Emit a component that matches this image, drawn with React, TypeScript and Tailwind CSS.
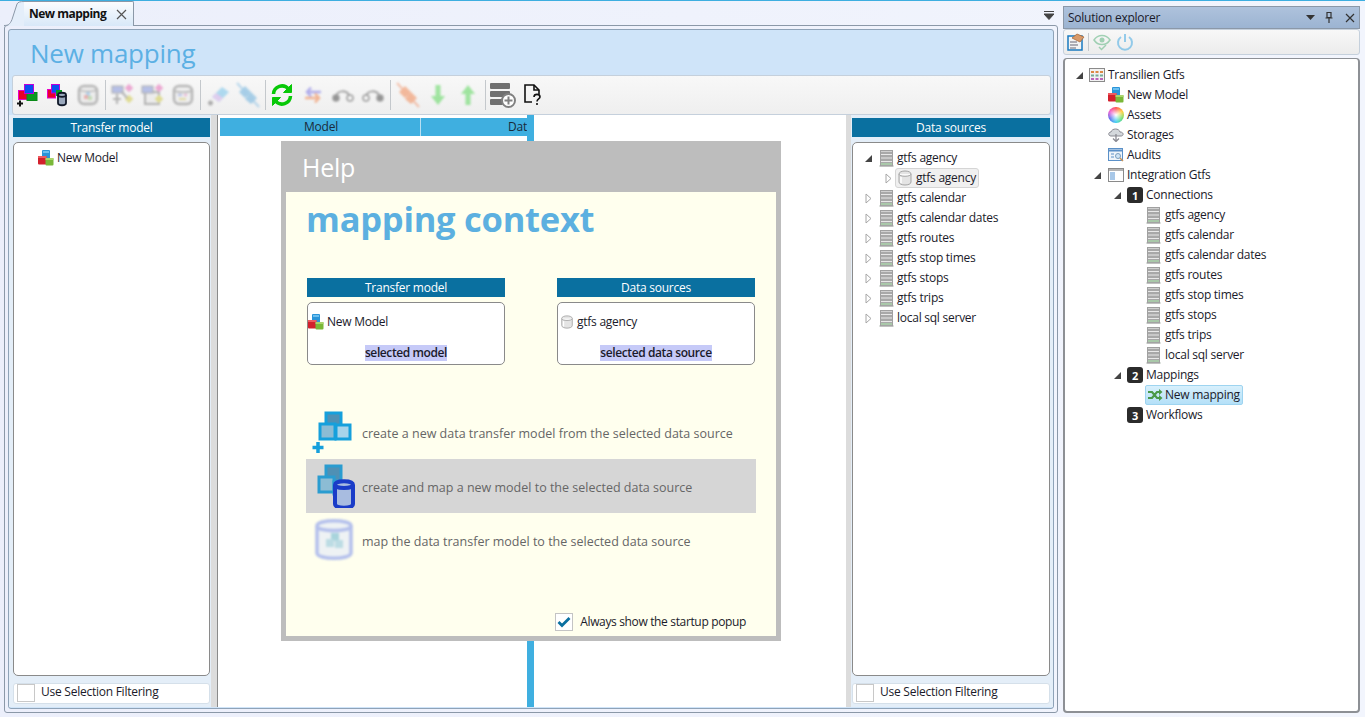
import { ReactNode } from "react";

function Cubes({ size = 16 }: { size?: number }) {
  return (
    <svg width={size} height={size} viewBox="0 0 16 16" className="shrink-0">
      <rect x="4" y="0" width="8" height="9" rx="1" fill="#2a94d8" />
      <rect x="5" y="1" width="6" height="2" fill="#6cc0f0" />
      <rect x="0" y="6" width="8.500" height="8.500" rx="1" fill="#d3202c" />
      <rect x="0" y="6" width="8.500" height="2" fill="#ee5a60" />
      <rect x="7.500" y="8" width="8" height="7.500" rx="1" fill="#7ab838" />
      <rect x="7.500" y="8" width="8" height="2" fill="#aad46c" />
    </svg>
  );
}

function Server() {
  return (
    <svg width="15" height="17" viewBox="0 0 15 17" className="shrink-0">
      <path d="M0 15h15v2H0z" fill="#e0e4e0" />
      <rect x="1.500" y="0.500" width="12" height="15.500" fill="#a8a8a8" stroke="#a0a0a0" />
      <path d="M2 1.500h11" stroke="#d0d0d0" strokeWidth="1" />
      <path d="M2 4.500h11M2 8h11M2 11.500h11" stroke="#e8e8e8" strokeWidth="1" />
      <path d="M2 14h11" stroke="#a9c8a9" strokeWidth="2" />
    </svg>
  );
}

function Cylinder({ size = 16 }: { size?: number }) {
  return (
    <svg width={size} height={size} viewBox="0 0 16 16" className="shrink-0">
      <path d="M2 4c0-4 12-4 12 0v8c0 4-12 4-12 0z" fill="#e4e4e4" stroke="#a5a5a5" />
      <path d="M2 4c0 3 12 3 12 0" fill="#fafafa" stroke="#a5a5a5" />
      <path d="M4 7v6" stroke="#ffffff" strokeWidth="1.500" />
    </svg>
  );
}

function Expanded() {
  return (
    <svg width="9" height="9" viewBox="0 0 9 9" className="shrink-0">
      <path d="M8 1v7H1z" fill="#444" />
    </svg>
  );
}

function Collapsed() {
  return (
    <svg width="9" height="11" viewBox="0 0 9 11" className="shrink-0">
      <path d="M2 1l5 4.500L2 10z" fill="#fff" stroke="#a6a6a6" />
    </svg>
  );
}

function Badge({ n }: { n: number }) {
  return (
    <span className="flex h-4 w-4 shrink-0 items-center justify-center rounded-[3px] bg-[#2b2b2b] text-[11px] font-bold leading-none text-white">
      {n}
    </span>
  );
}

function ToolSep() {
  return <div className="mx-[2px] h-[30px] w-px shrink-0 bg-[#c4c8cc]" />;
}

function Tool({ children, soft = false }: { children: ReactNode; soft?: boolean }) {
  return (
    <div className={soft ? "flex w-[30px] shrink-0 items-center justify-center opacity-45 blur-[0.8px]" : "flex w-[30px] shrink-0 items-center justify-center"}>
      {children}
    </div>
  );
}

function NewModelTool() {
  return (
    <svg width="24" height="24" viewBox="0 0 24 24" className="-ml-[2px]">
      <rect x="3.500" y="7.500" width="9" height="9" fill="#e8002a" stroke="#e800c8" />
      <rect x="12" y="9.500" width="10" height="8" fill="#0a9a20" stroke="#0a8a18" />
      <rect x="9.500" y="1.500" width="9" height="9" fill="#0a50f0" stroke="#c000d8" />
      <path d="M5 17.500v6M2 20.500h6" stroke="#111" strokeWidth="2" />
    </svg>
  );
}

function MapModelTool() {
  return (
    <svg width="24" height="24" viewBox="0 0 24 24" className="-ml-[2px]">
      <rect x="2.500" y="6.500" width="8" height="8.500" fill="#e8002a" stroke="#e800c8" />
      <rect x="6.500" y="1.500" width="8" height="8.500" fill="#0a50f0" stroke="#c000d8" />
      <rect x="11" y="7" width="6" height="6" fill="#0a9a20" />
      <path d="M13 12c0-3 8-3 8 0v8c0 3-8 3-8 0z" fill="#9aa8bc" stroke="#101828" strokeWidth="1.800" />
      <path d="M13 12c0 2.500 8 2.500 8 0" fill="none" stroke="#101828" strokeWidth="1.800" />
    </svg>
  );
}

function DbModel() {
  return (
    <svg width="24" height="24" viewBox="0 0 24 24">
      <rect x="3" y="3" width="18" height="18" rx="5" fill="#e6e6e6" stroke="#6a6a6a" strokeWidth="2.500" />
      <path d="M4 7c3 2 13 2 16 0" fill="none" stroke="#6a6a6a" strokeWidth="1.500" />
      <rect x="10" y="9" width="4" height="4" fill="#6aa8dd" />
      <rect x="8" y="12" width="4" height="4" fill="#d86060" />
      <rect x="12" y="13" width="4" height="4" fill="#8cc070" />
    </svg>
  );
}

function Graph({ frame = false }: { frame?: boolean }) {
  return (
    <svg width="26" height="24" viewBox="0 0 26 24">
      {frame && <rect x="5" y="9" width="14" height="12" fill="#e4e4e4" stroke="#666" strokeWidth="2" />}
      <rect x="2" y="3" width="11" height="7" fill="#6a80d8" stroke="#555" />
      <rect x="16" y="2" width="6" height="6" transform="rotate(45 19 5)" fill="#e04ca8" />
      <rect x="16" y="13" width="6" height="6" transform="rotate(45 19 16)" fill="#c8c020" />
      {!frame && <path d="M12 9l5 6M7 11v10M3 16h8" stroke="#666" strokeWidth="2" fill="none" />}
    </svg>
  );
}

function Table() {
  return (
    <svg width="24" height="24" viewBox="0 0 24 24">
      <rect x="3" y="3" width="18" height="18" rx="5" fill="#ececec" stroke="#6a6a6a" strokeWidth="2.500" />
      <path d="M4 8c3 1.500 13 1.500 16 0" fill="none" stroke="#6a6a6a" strokeWidth="1.500" />
      <path d="M7 12h4" stroke="#6a80d8" strokeWidth="2" />
      <path d="M13 12h3" stroke="#d860a8" strokeWidth="2" />
      <path d="M8 16h7" stroke="#c8b840" strokeWidth="2" />
    </svg>
  );
}

function Eraser() {
  return (
    <svg width="24" height="24" viewBox="0 0 24 24">
      <path d="M6 14L16 4l7 5-10 10z" fill="#58b8e8" />
      <path d="M6 14l4-4 7 5-4 4z" fill="#c8a0e8" />
      <path d="M2 20h5M4.500 17.500v5" stroke="#555" strokeWidth="2.500" />
    </svg>
  );
}

function Plug({ color, line }: { color: string; line: string }) {
  return (
    <svg width="26" height="26" viewBox="0 0 26 26">
      <path d="M2 1l22 24" stroke={line} strokeWidth="2" />
      <path d="M4 10l6-6 6 6-6 6zM10 17l6-7 6 6-6 6z" fill={color} />
    </svg>
  );
}

function Refresh() {
  return (
    <svg width="24" height="24" viewBox="0 0 24 24" fill="none" stroke="#08c808" strokeWidth="3.500" className="-ml-[2px]">
      <path d="M3.500 11a8.500 8.500 0 0 1 15-5l1.500 2" />
      <path d="M21.500 1.500v8h-8z" strokeWidth="1" fill="#08c808" />
      <path d="M20.500 13a8.500 8.500 0 0 1-15 5L4 16" />
      <path d="M2.500 22.500v-8h8z" strokeWidth="1" fill="#08c808" />
    </svg>
  );
}

function Swap() {
  return (
    <svg width="22" height="22" viewBox="0 0 22 22" fill="none" strokeWidth="2.500">
      <path d="M19 8H5M9 3.500L5 8l4 4.500" stroke="#6058e0" />
      <path d="M3 14h14M13 9.500l4 4.500-4 4.500" stroke="#f06820" />
    </svg>
  );
}

function Curve({ flip = false }: { flip?: boolean }) {
  return (
    <svg width="24" height="24" viewBox="0 0 24 24" fill="none">
      <path d="M5 13c2-6 10-6 13-1" stroke="#444" strokeWidth="2" />
      <circle cx="5" cy="15" r="3" fill={flip ? "#fff" : "#222"} stroke="#333" strokeWidth="1.500" />
      <circle cx="19" cy="15" r="3" fill={flip ? "#222" : "#fff"} stroke="#333" strokeWidth="1.500" />
    </svg>
  );
}

function Arrow({ up = false }: { up?: boolean }) {
  return (
    <svg width="20" height="24" viewBox="0 0 20 24" fill="#38d038">
      <path d={up ? "M10 2l7 9h-4.500v11h-5V11H3z" : "M10 22l7-9h-4.500V2h-5v11H3z"} />
    </svg>
  );
}

function StackPlus() {
  return (
    <svg width="26" height="26" viewBox="0 0 26 26">
      <rect x="0" y="1" width="20" height="6" rx="1" fill="#707070" />
      <rect x="0" y="9" width="20" height="6" rx="1" fill="#707070" />
      <rect x="0" y="17" width="13" height="6" rx="1" fill="#707070" />
      <circle cx="18.500" cy="18.500" r="6.500" fill="#fff" stroke="#808080" strokeWidth="2" />
      <path d="M18.500 14.500v8M14.500 18.500h8" stroke="#808080" strokeWidth="2" />
    </svg>
  );
}

function DocHelp() {
  return (
    <svg width="20" height="22" viewBox="0 0 20 22" fill="none" stroke="#111" strokeWidth="1.600">
      <path d="M9 18H2V1h9l5 5v4" />
      <path d="M11 1v5h5" />
      <path d="M11 13c0-3.500 6-3.500 6 0 0 2-3 2-3 4.500" />
      <path d="M14 19v2" />
    </svg>
  );
}

function Toolbar() {
  return (
    <div className="ml-[3px] mr-[2px] flex h-[40px] shrink-0 items-center rounded-[3px] border border-[#c5d0dc] bg-gradient-to-b from-[#f8f8f8] to-[#efefef]">
      <Tool><NewModelTool /></Tool>
      <Tool><MapModelTool /></Tool>
      <Tool soft><DbModel /></Tool>
      <ToolSep />
      <Tool soft><Graph /></Tool>
      <Tool soft><Graph frame /></Tool>
      <Tool soft><Table /></Tool>
      <ToolSep />
      <Tool soft><Eraser /></Tool>
      <Tool soft><Plug color="#4aa0d8" line="#6ab0e0" /></Tool>
      <ToolSep />
      <Tool><Refresh /></Tool>
      <Tool soft><Swap /></Tool>
      <Tool soft><Curve /></Tool>
      <Tool soft><Curve flip /></Tool>
      <ToolSep />
      <Tool soft><Plug color="#f07030" line="#f08050" /></Tool>
      <Tool soft><Arrow /></Tool>
      <Tool soft><Arrow up /></Tool>
      <ToolSep />
      <Tool><div className="blur-[0.4px]"><StackPlus /></div></Tool>
      <Tool><DocHelp /></Tool>
    </div>
  );
}

function Filter() {
  return (
    <div className="mt-[7px] flex h-[21px] shrink-0 items-center rounded-[3px] border border-[#d5e0ea] bg-white">
      <span className="ml-[3px] h-[18px] w-[18px] shrink-0 self-start border border-[#c8c8c8] bg-white" />
      <span className="-mt-[3px] ml-[6px] text-[12px] leading-none text-[#1a1a2a]">Use Selection Filtering</span>
    </div>
  );
}

function SideHeader({ label }: { label: string }) {
  return (
    <div className="flex h-[19px] w-full shrink-0 items-center justify-center bg-[#0a70a0] text-[12px] leading-none text-white">
      {label}
    </div>
  );
}

const sources = ["gtfs calendar", "gtfs calendar dates", "gtfs routes", "gtfs stop times", "gtfs stops", "gtfs trips", "local sql server"];
const connections = ["gtfs agency", "gtfs calendar", "gtfs calendar dates", "gtfs routes", "gtfs stop times", "gtfs stops", "gtfs trips", "local sql server"];

function Row({ pad, children }: { pad: string; children: ReactNode }) {
  return <div className={"flex h-5 items-center whitespace-nowrap text-[12px] text-[#1a1a2a] " + pad}>{children}</div>;
}

function HelpCard({ title, icon, name, note }: { title: string; icon: ReactNode; name: string; note: string }) {
  return (
    <div className="flex w-[198px] flex-col">
      <SideHeader label={title} />
      <div className="mt-[5px] flex h-[63px] flex-col rounded-[5px] border border-[#8a8a8a] bg-white">
        <div className="mt-[9px] flex h-5 items-center gap-[3px] text-[12px] text-[#1a1a2a]">{icon}{name}</div>
        <div className="mt-[13px] flex justify-center">
          <span className="bg-[#c6caf8] text-[12px] font-semibold leading-[16px] tracking-[-0.4px] text-[#1a1a2a]">{note}</span>
        </div>
      </div>
    </div>
  );
}

function HelpAction({ icon, label, active = false }: { icon: ReactNode; label: string; active?: boolean }) {
  return (
    <div className={active ? "flex h-[54px] w-[450px] items-center bg-[#d6d6d6]" : "flex h-[54px] w-[450px] items-center"}>
      <div className="flex w-[56px] shrink-0 items-center justify-center">{icon}</div>
      <span className="pt-[5px] text-[12.500px] tracking-normal text-[#666666]">{label}</span>
    </div>
  );
}

function HelpCubes({ plus = false }: { plus?: boolean }) {
  return (
    <svg width="44" height="44" viewBox="0 0 44 44">
      <rect x="14" y="3" width="15" height="15" fill="#4f90b4" stroke="#16a0dc" strokeWidth="3" />
      <rect x="8" y="14" width="15" height="15" fill="#8cbcd4" stroke="#16a0dc" strokeWidth="3" />
      <rect x="24" y="15" width="14" height="14" fill="#a8d4ea" stroke="#16a0dc" strokeWidth="3" />
      {plus && <path d="M6 32v11M0.500 37.500h11" stroke="#16a0dc" strokeWidth="3.500" />}
    </svg>
  );
}

function HelpCubesDb() {
  return (
    <svg width="44" height="44" viewBox="0 0 44 44">
      <rect x="14" y="2" width="15" height="15" fill="#4f90b4" stroke="#2a9cd0" strokeWidth="3" />
      <rect x="7" y="13" width="15" height="15" fill="#8cbcd4" stroke="#2a9cd0" strokeWidth="3" />
      <rect x="22" y="18" width="12" height="12" fill="#a8d4ea" stroke="#2a9cd0" strokeWidth="3" />
      <path d="M23 21c0-5 18-5 18 0v19c0 5-18 5-18 0z" fill="#a8bce0" stroke="#1a3cc8" strokeWidth="4" />
      <path d="M23 21c0 4 18 4 18 0" fill="none" stroke="#1a3cc8" strokeWidth="4" />
    </svg>
  );
}

function HelpDb() {
  return (
    <svg width="44" height="44" viewBox="0 0 44 44" className="blur-[0.8px]">
      <path d="M5 8c0-7 34-7 34 0v27c0 7-34 7-34 0z" fill="#eef2f4" stroke="#b4c0ec" strokeWidth="3.500" />
      <path d="M5 8c0 6 34 6 34 0" fill="none" stroke="#b4c0ec" strokeWidth="3.500" />
      <rect x="19" y="15" width="8" height="8" fill="#a8d4dc" />
      <rect x="14" y="21" width="8" height="8" fill="#bcdce4" />
      <rect x="23" y="22" width="8" height="8" fill="#bcdce4" />
    </svg>
  );
}

function HelpPopup() {
  return (
    <div className="absolute left-[63px] top-[26px] z-10 flex h-[500px] w-[500px] flex-col border-[5px] border-t-0 border-[#bdbdbd] bg-[#ffffee]">
      <div className="-mx-[5px] flex h-[51px] shrink-0 items-center bg-[#bdbdbd] pl-[21px] pt-[2px] text-[25px] leading-none text-white">Help</div>
      <div className="pl-[20px] pt-[5px] text-[34.500px] font-bold leading-[44px] text-[#5cb0e0]">mapping context</div>
      <div className="ml-[21px] mt-[37px] flex gap-[52px]">
        <HelpCard title="Transfer model" icon={<Cubes />} name="New Model" note="selected model" />
        <HelpCard title="Data sources" icon={<span className="ml-[2px]"><Cylinder size={14} /></span>} name="gtfs agency" note="selected data source" />
      </div>
      <div className="ml-[20px] mt-[40px] flex flex-col">
        <HelpAction icon={<HelpCubes plus />} label="create a new data transfer model from the selected data source" />
        <HelpAction active icon={<HelpCubesDb />} label="create and map a new model to the selected data source" />
        <HelpAction icon={<HelpDb />} label="map the data transfer model to the selected data source" />
      </div>
      <div className="mb-[5px] mr-[30px] mt-auto flex items-center justify-end gap-[7px]">
        <span className="flex h-[18px] w-[18px] items-center justify-center border border-[#c4c4c4] bg-white">
          <svg width="14" height="12" viewBox="0 0 14 12">
            <path d="M1.500 6l3.500 3.500L12.500 2" fill="none" stroke="#0a70a0" strokeWidth="2.800" />
          </svg>
        </span>
        <span className="text-[12px] leading-none tracking-[-0.35px] text-[#1a1a2a]">Always show the startup popup</span>
      </div>
    </div>
  );
}

function DocumentPane() {
  return (
    <div className="flex h-[712px] w-[1058px] shrink-0 flex-col">
      <div className="relative flex h-[24px] shrink-0 items-end pl-[4px]">
        <svg width="20" height="25" viewBox="0 0 20 25" className="relative z-10 -mb-px shrink-0">
          <path d="M0 25c4 0 6-1 8-6L13 3c1-2 3-3 7-3v25z" fill="#e4eefa" />
          <path d="M0 24.500c4 0 6-1 8-6L13 3c1-2 3-2.500 7-2.500" fill="none" stroke="#8b98a8" />
        </svg>
        <div className="relative z-10 -mb-px flex h-[25px] w-[110px] items-center justify-between rounded-tr-[2px] border-r border-t border-[#8b98a8] bg-gradient-to-b from-[#fbfcfe] to-[#d8e8f8] pl-[5px] pr-[6px]">
          <span className="whitespace-nowrap text-[12px] font-bold leading-none tracking-[-0.5px] text-[#111]">New mapping</span>
          <svg width="11" height="11" viewBox="0 0 11 11" className="shrink-0">
            <path d="M1 1l9 9M10 1l-9 9" stroke="#555" strokeWidth="1.200" />
          </svg>
        </div>
        <svg width="10" height="9" viewBox="0 0 10 9" className="absolute right-[4px] top-[10px]">
          <path d="M0 0.500h10M0 3h10l-5 5.500z" stroke="#444" fill="#444" />
        </svg>
      </div>
      <div className="ml-[4px] flex min-h-0 flex-1 flex-col rounded-[3px] border border-[#8b98a8] p-[3px]">
        <div className="flex min-h-0 flex-1 flex-col rounded-[3px] border border-[#8fa3b8] bg-[#cfe4f9]">
          <div className="flex h-[45px] shrink-0 items-center pl-[21px] text-[26px] leading-none text-[#5cb0e4]">New mapping</div>
          <Toolbar />
          <div className="flex min-h-0 flex-1 pb-[1px]">
            <div className="flex w-[202px] shrink-0 flex-col bg-[#e4eef8] pb-[3px] pl-[4px] pr-[1px] pt-[3px]">
              <SideHeader label="Transfer model" />
              <div className="mt-[5px] flex-1 rounded-[5px] border border-[#8a8a8a] bg-white pl-[24px] pt-[5px]">
                <Row pad="gap-[3px]"><Cubes />New Model</Row>
              </div>
              <Filter />
            </div>
            <div className="w-[6px] shrink-0 bg-[#dcdcdc]" />
            <div className="relative flex w-[629px] shrink-0 border-l border-[#8a8a8a] bg-white">
              <div className="w-[309px] shrink-0 pl-[2px] pt-[3px]">
                <div className="flex h-[18px] w-[307px] overflow-hidden bg-[#3fafe0] text-[12px] leading-[18px] text-[#1a2a3a]">
                  <div className="flex w-[201px] shrink-0 justify-center border-r border-[#b8dff2] pl-[2px]">Model</div>
                  <div className="flex shrink-0 pl-[87px]">Data</div>
                </div>
              </div>
              <div className="w-[7px] shrink-0 bg-[#3fafe0]" />
              <HelpPopup />
            </div>
            <div className="w-[5px] shrink-0 bg-[#dcdcdc]" />
            <div className="flex min-w-0 flex-1 flex-col bg-[#e4eef8] pb-[3px] pl-[1px] pr-[3px] pt-[3px]">
              <SideHeader label="Data sources" />
              <div className="mt-[5px] flex-1 rounded-[5px] border border-[#8a8a8a] bg-white pl-[11px] pt-[5px]">
                <Row pad="gap-[6px]">
                  <Expanded />
                  <span className="flex items-center gap-[3px]"><Server />gtfs agency</span>
                </Row>
                <Row pad="pl-[20px]">
                  <Collapsed />
                  <span className="ml-[2px] flex h-5 items-center gap-[3px] rounded-[3px] border border-[#d5d5d5] bg-[#f0f0f0] pl-[1px] pr-[2px]"><Cylinder />gtfs agency</span>
                </Row>
                {sources.map((s) => (
                  <Row key={s} pad="gap-[6px]">
                    <Collapsed />
                    <span className="flex items-center gap-[3px]"><Server />{s}</span>
                  </Row>
                ))}
              </div>
              <Filter />
            </div>
          </div>
        </div>
      </div>
    </div>
  );
}

function SolutionTree() {
  return (
    <div className="mt-[3px] flex-1 rounded-[4px] border-2 border-t border-[#8d9095] bg-white pl-[10px] pt-[6px]">
      <Row pad="gap-[5px]">
        <Expanded />
        <svg width="16" height="14" viewBox="0 0 16 14" className="shrink-0">
          <rect x="0.500" y="0.500" width="15" height="13" fill="#f2f2f2" stroke="#8a8a8a" />
          <path d="M2 4h3M6.500 4h3M11 4h3" stroke="#d84" strokeWidth="2" />
          <path d="M2 7.500h3M6.500 7.500h3M11 7.500h3" stroke="#7a9" strokeWidth="2" />
          <path d="M2 11h3M6.500 11h3M11 11h3" stroke="#b6b" strokeWidth="2" />
        </svg>
        <span className="-ml-[2px]">Transilien Gtfs</span>
      </Row>
      <Row pad="pl-[33px] gap-[3px]"><Cubes />New Model</Row>
      <Row pad="pl-[33px] gap-[3px]">
        <span className="h-4 w-4 shrink-0 rounded-full bg-[radial-gradient(circle,#ffffff_0%,#ffffff00_65%),conic-gradient(#ff5050,#ffd040,#70e070,#40d0f0,#6070f0,#f060d0,#ff5050)]" />
        Assets
      </Row>
      <Row pad="pl-[33px] gap-[3px]">
        <svg width="16" height="14" viewBox="0 0 16 14" className="shrink-0">
          <path d="M3 8c-3 0-3-4 0-4 1-4 8-4 9 0 4 0 4 4 1 4z" fill="#d4d8dc" stroke="#8a8a92" />
          <path d="M8 6v7M5 10.500l3 3 3-3" fill="none" stroke="#8a8a92" strokeWidth="1.300" />
        </svg>
        Storages
      </Row>
      <Row pad="pl-[33px] gap-[3px]">
        <svg width="16" height="14" viewBox="0 0 16 14" className="shrink-0">
          <rect x="0.500" y="0.500" width="14" height="12" fill="#eef4fa" stroke="#5a90c8" />
          <path d="M1 2.500h13" stroke="#5a90c8" strokeWidth="2" />
          <path d="M3 6h3M3 9h3" stroke="#5a90c8" />
          <circle cx="10" cy="8" r="2.500" fill="#cfe4f5" stroke="#7aa0c0" />
          <path d="M12 10l3 3" stroke="#c8945a" strokeWidth="1.500" />
        </svg>
        Audits
      </Row>
      <Row pad="pl-[18px] gap-[6px]">
        <Expanded />
        <svg width="16" height="14" viewBox="0 0 16 14" className="shrink-0">
          <rect x="0.500" y="0.500" width="15" height="13" fill="#fff" stroke="#8a8a8a" />
          <path d="M1 2h14" stroke="#b4b4b4" strokeWidth="2" />
          <rect x="2" y="4" width="5" height="8" fill="#a8c8e8" />
        </svg>
        <span className="-ml-[3px]">Integration Gtfs</span>
      </Row>
      <Row pad="pl-[38px] gap-[5px]"><Expanded /><Badge n={1} /><span className="-ml-[2px]">Connections</span></Row>
      {connections.map((c) => (
        <Row key={c} pad="pl-[71px] gap-[4px]"><Server />{c}</Row>
      ))}
      <Row pad="pl-[38px] gap-[5px]"><Expanded /><Badge n={2} /><span className="-ml-[2px]">Mappings</span></Row>
      <Row pad="pl-[70px]">
        <span className="flex h-5 items-center gap-[2px] rounded-[2px] border border-[#9ed4f0] bg-gradient-to-b from-[#d8f0fc] to-[#b4e0f8] pl-[1px] pr-[2px]">
          <svg width="16" height="14" viewBox="0 0 16 14" className="shrink-0">
            <path d="M1 4h4l5 6h3M1 10h4l5-6h3" fill="none" stroke="#4a9a4a" strokeWidth="2.200" />
            <path d="M12 1l3.500 3-3.500 3zM12 7l3.500 3-3.500 3z" fill="#4a9a4a" />
          </svg>
          New mapping
        </span>
      </Row>
      <Row pad="pl-[52px] gap-[3px]"><Badge n={3} />Workflows</Row>
    </div>
  );
}

function SolutionPane() {
  return (
    <div className="ml-[5px] mt-[5px] flex h-[707px] w-[297px] shrink-0 flex-col">
      <div className="flex h-[23px] shrink-0 items-center border border-[#8b98a8] bg-gradient-to-b from-[#aec2dc] to-[#9cb4d2] pl-[4px] pr-[3px] text-[12px] leading-none text-[#1a1a2a]">
        <span>Solution explorer</span>
        <svg width="9" height="5" viewBox="0 0 9 5" className="ml-auto"><path d="M0 0h9L4.500 5z" fill="#333" /></svg>
        <svg width="8" height="11" viewBox="0 0 8 11" className="ml-[10px]"><path d="M2 0.500h4v5H2zM0.500 6h7M4 6v5" fill="none" stroke="#333" strokeWidth="1.200" /></svg>
        <svg width="10" height="10" viewBox="0 0 10 10" className="ml-[12px] mr-[1px]"><path d="M1 1l8 8M9 1l-8 8" stroke="#333" strokeWidth="1.200" /></svg>
      </div>
      <div className="flex h-[26px] shrink-0 items-center rounded-[3px] border border-[#c5d0dc] bg-gradient-to-b from-[#f8f8f8] to-[#ececec] pl-[3px]">
        <svg width="18" height="18" viewBox="0 0 18 18" className="shrink-0">
          <rect x="1" y="3" width="14" height="14" fill="#f4f4f4" stroke="#1a7ac0" strokeWidth="1.500" />
          <path d="M3 9h7M3 12h8M3 15h6" stroke="#667" />
          <path d="M5 5l5-4 7 3-4 5z" fill="#d89a6a" stroke="#a86a3a" strokeWidth="0.800" />
        </svg>
        <span className="ml-[3px] h-[18px] w-px bg-[#c4c8cc]" />
        <svg width="18" height="18" viewBox="0 0 18 18" fill="none" className="ml-[4px] shrink-0 opacity-60 blur-[0.4px]">
          <path d="M1 7c4-6 12-6 16 0-4 6-12 6-16 0z" stroke="#6aba8a" strokeWidth="1.500" />
          <circle cx="9" cy="7" r="2.500" fill="#6aba8a" />
          <path d="M6 14l2.500 2.500L13 12" stroke="#6aba8a" strokeWidth="1.500" />
        </svg>
        <svg width="18" height="18" viewBox="0 0 18 18" fill="none" className="ml-[5px] shrink-0 opacity-60 blur-[0.4px]">
          <path d="M5 4a7 7 0 1 0 8 0M9 1v8" stroke="#54b0e4" strokeWidth="2" />
        </svg>
      </div>
      <SolutionTree />
    </div>
  );
}

export default function App() {
  return (
    <div className="h-[728px] w-[1365px] overflow-hidden bg-white font-['Open_Sans','Noto_Sans',sans-serif] tracking-[-0.25px]">
      <div className="h-[717px] border-t border-[#3daee0] bg-gradient-to-r from-[#eceffb] to-[#f2f5fd]">
        <div className="flex">
          <DocumentPane />
          <SolutionPane />
        </div>
      </div>
    </div>
  );
}
